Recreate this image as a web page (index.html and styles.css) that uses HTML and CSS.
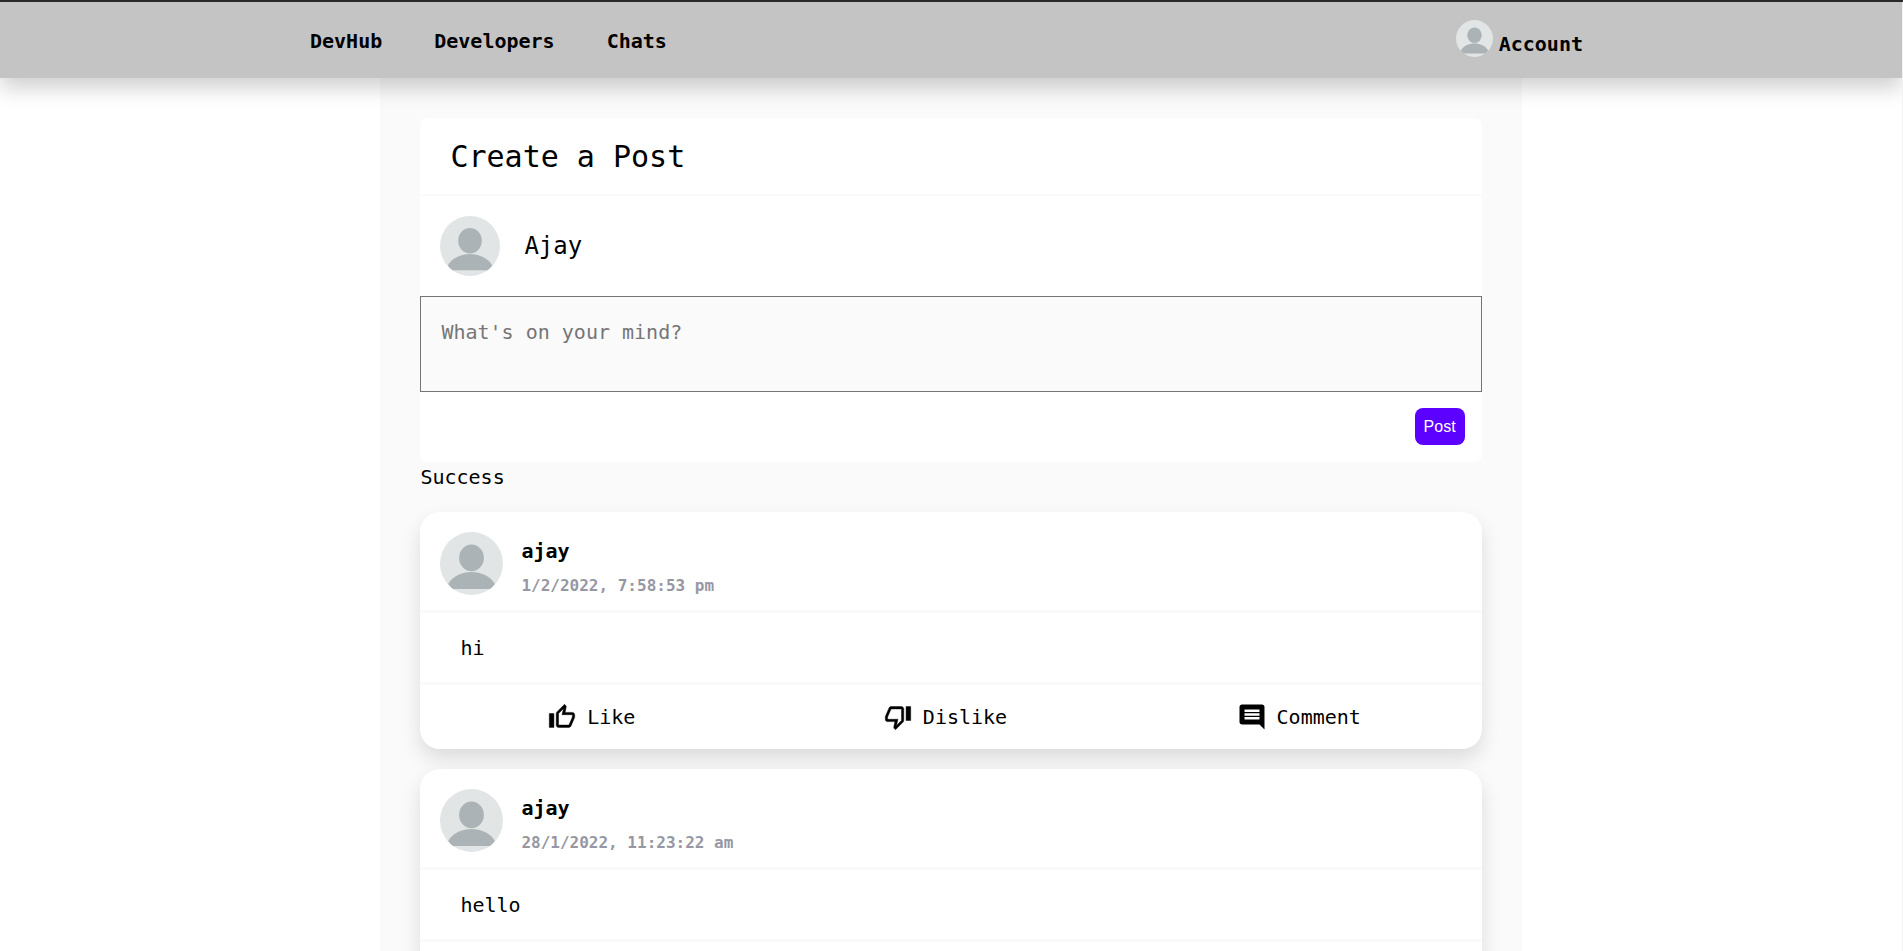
FILE: index.html
```html
<!DOCTYPE html>
<html lang="en">
<head>
<meta charset="utf-8">
<title>DevHub</title>
<link rel="stylesheet" href="styles.css">
</head>
<body>
<svg class="defs" aria-hidden="true">
  <symbol id="avatar" viewBox="0 0 60 60">
    <circle cx="30" cy="30" r="30" fill="#e1e5e5"/>
    <ellipse cx="30" cy="24.7" rx="11.8" ry="12.7" fill="#abb3b6"/>
    <path d="M7.800 49.500C12 42 21 38 30 38s18 4 22.200 11.500Q50 52.500 47.600 54.300H12.400Q10 52.500 7.800 49.500z" fill="#abb3b6"/>
  </symbol>
  <symbol id="up" viewBox="-1 -1 26 26"><path stroke="#000" stroke-width=".4" d="M9 21h9c.83 0 1.540-.5 1.840-1.220l3.020-7.050c.09-.23.14-.47.14-.73v-2c0-1.100-.9-2-2-2h-6.310l.95-4.570.03-.32c0-.41-.17-.79-.44-1.060L14.170 1 7.580 7.590C7.220 7.950 7 8.450 7 9v10c0 1.100.9 2 2 2zM9 9l4.340-4.340L12 10h9v2l-3 7H9V9zM1 9h4v12H1z"/></symbol>
  <symbol id="down" viewBox="-1 -1 26 26"><path stroke="#000" stroke-width=".4" d="M15 3H6c-.83 0-1.540.5-1.840 1.220l-3.020 7.050c-.09.23-.14.47-.14.73v2c0 1.100.9 2 2 2h6.310l-.95 4.570-.03.32c0 .41.17.79.44 1.060L9.830 23l6.590-6.590c.36-.36.58-.86.58-1.410V5c0-1.100-.9-2-2-2zm0 12l-4.340 4.340L12 14H3v-2l3-7h9v10zm4-12h4v12h-4z"/></symbol>
  <symbol id="comment" viewBox="0 0 24 24"><path d="M21.990 4c0-1.100-.89-2-1.990-2H4c-1.100 0-2 .9-2 2v12c0 1.100.9 2 2 2h14l4 4-.01-18zM18 14H6v-2h12v2zm0-3H6V9h12v2zm0-3H6V6h12v2z"/></symbol>
</svg>
<header class="navbar">
  <nav class="nav-links">
    <a href="#">DevHub</a>
    <a href="#">Developers</a>
    <a href="#">Chats</a>
  </nav>
  <a class="account" href="#"><svg class="avatar avatar-small"><use href="#avatar"/></svg><span>Account</span></a>
</header>
<main class="feed">
  <form class="composer">
    <h1 class="composer-title">Create a Post</h1>
    <div class="composer-user"><svg class="avatar"><use href="#avatar"/></svg><span>Ajay</span></div>
    <textarea class="composer-text" aria-label="Post text" placeholder="What's on your mind?"></textarea>
    <div class="composer-footer"><button class="post-button" type="button">Post</button></div>
  </form>
  <p class="status">Success</p>
  <article class="post">
    <header class="post-header">
      <svg class="avatar avatar-post"><use href="#avatar"/></svg>
      <div><h2 class="post-author">ajay</h2><time class="post-time">1/2/2022, 7:58:53 pm</time></div>
    </header>
    <p class="post-body">hi</p>
    <div class="post-actions">
      <button type="button"><svg class="icon"><use href="#up"/></svg>Like</button>
      <button type="button"><svg class="icon"><use href="#down"/></svg>Dislike</button>
      <button type="button"><svg class="icon"><use href="#comment"/></svg>Comment</button>
    </div>
  </article>
  <article class="post">
    <header class="post-header">
      <svg class="avatar avatar-post"><use href="#avatar"/></svg>
      <div><h2 class="post-author">ajay</h2><time class="post-time">28/1/2022, 11:23:22 am</time></div>
    </header>
    <p class="post-body">hello</p>
    <div class="post-actions">
      <button type="button"><svg class="icon"><use href="#up"/></svg>Like</button>
      <button type="button"><svg class="icon"><use href="#down"/></svg>Dislike</button>
      <button type="button"><svg class="icon"><use href="#comment"/></svg>Comment</button>
    </div>
  </article>
</main>
</body>
</html>
```
FILE: styles.css
```css
* { box-sizing: border-box; }
html {
  border-top: 2px solid #2a2a2a;
  background: #fff;
}
body {
  margin: 0;
  border-right: 1px solid #f1f1f1;
  font: 20px/30px "DejaVu Sans Mono", monospace;
  color: #000;
}
h1, h2, p { margin: 0; font-size: inherit; font-weight: inherit; }
a { color: inherit; text-decoration: none; }
button { border: 0; background: none; color: inherit; font: inherit; cursor: pointer; }
.defs { position: absolute; width: 0; height: 0; }

.navbar {
  position: relative;
  display: flex;
  justify-content: space-between;
  align-items: center;
  height: 76px;
  padding: 0 319px 0 310px;
  background: #c4c4c4;
  font-weight: 700;
  box-shadow: 0 10px 20px rgba(0, 0, 0, 0.19);
}
.nav-links { display: flex; gap: 52px; padding-top: 2px; }
.account { display: flex; align-items: flex-end; gap: 6px; padding-bottom: 2px; }

.avatar { display: block; flex: none; width: 60px; height: 60px; }
.avatar-small { width: 37px; height: 37px; margin-bottom: 2px; }
.avatar-post { width: 63px; height: 63px; }

.feed { width: 60%; margin: 0 auto; padding: 40px; background: #fafafa; }
.composer { background: #fff; border-radius: 8px; }
.composer-title {
  padding: 16px 30px 15px;
  border-bottom: 2px solid #fafafa;
  font-size: 30px;
  line-height: 45px;
}
.composer-user { display: flex; align-items: center; gap: 24px; padding: 20px; font-size: 24px; }
.composer-text {
  display: block;
  width: 100%;
  height: 96px;
  padding: 20px;
  border: 1px solid #767676;
  border-radius: 0;
  background: #fafafa;
  font: inherit;
  resize: none;
}
.composer-text::placeholder { color: #767676; }
.composer-footer { display: flex; justify-content: flex-end; padding: 16px 17px 17px; }
.post-button {
  height: 37px;
  padding: 0 9px;
  border-radius: 8px;
  background: #5c00ff;
  color: #fff;
  font: 16px "Liberation Sans", Arial, sans-serif;
}
.status { margin-bottom: 20px; }

.post {
  margin-bottom: 20px;
  border-radius: 20px;
  background: #fff;
  box-shadow: 0 10px 20px rgba(0, 0, 0, 0.12);
}
.post-header {
  display: flex;
  align-items: flex-start;
  gap: 18px;
  height: 101px;
  padding: 20px;
  border-bottom: 3px solid #fafafa;
}
.post-author { padding-top: 4px; font-weight: 700; }
.post-time { display: block; padding-top: 5px; color: #9797a3; font-size: 16px; font-weight: 700; }
.post-body { padding: 20px 40px 19px; border-bottom: 3px solid #fafafa; }
.post-actions { display: grid; grid-template-columns: repeat(3, 1fr); height: 64px; }
.post-actions button {
  display: flex;
  align-items: center;
  justify-content: center;
  gap: 10px;
  padding: 0 12px 0 0;
}
.icon { width: 30px; height: 30px; }
```
